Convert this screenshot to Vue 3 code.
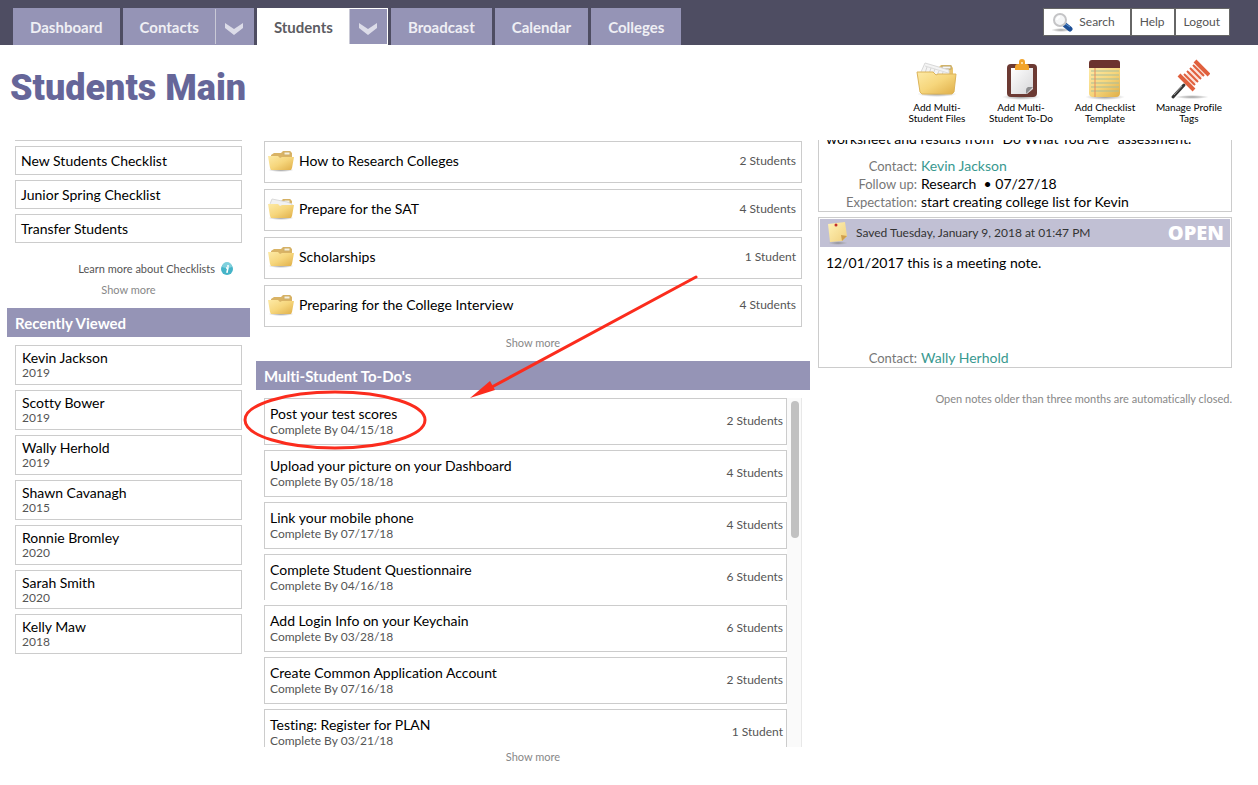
<script setup>
const checklists = ['New Students Checklist', 'Junior Spring Checklist', 'Transfer Students']

const recent = [
  { name: 'Kevin Jackson', year: '2019' },
  { name: 'Scotty Bower', year: '2019' },
  { name: 'Wally Herhold', year: '2019' },
  { name: 'Shawn Cavanagh', year: '2015' },
  { name: 'Ronnie Bromley', year: '2020' },
  { name: 'Sarah Smith', year: '2020' },
  { name: 'Kelly Maw', year: '2018' },
]

const files = [
  { title: 'How to Research Colleges', count: '2 Students', full: false },
  { title: 'Prepare for the SAT', count: '4 Students', full: true },
  { title: 'Scholarships', count: '1 Student', full: false },
  { title: 'Preparing for the College Interview', count: '4 Students', full: false },
]

const todos = [
  { title: 'Post your test scores', due: '04/15/18', count: '2 Students' },
  { title: 'Upload your picture on your Dashboard', due: '05/18/18', count: '4 Students' },
  { title: 'Link your mobile phone', due: '07/17/18', count: '4 Students' },
  { title: 'Complete Student Questionnaire', due: '04/16/18', count: '6 Students' },
  { title: 'Add Login Info on your Keychain', due: '03/28/18', count: '6 Students' },
  { title: 'Create Common Application Account', due: '07/16/18', count: '2 Students' },
  { title: 'Testing: Register for PLAN', due: '03/21/18', count: '1 Student' },
]
</script>

<template>
  <div class="page">
    <svg class="defs" width="0" height="0" aria-hidden="true">
      <defs>
        <linearGradient id="gold" x1="0" y1="0" x2="1" y2="1">
          <stop offset="0" stop-color="#fdeaa6" />
          <stop offset="0.5" stop-color="#f6d67c" />
          <stop offset="1" stop-color="#dfae48" />
        </linearGradient>
        <linearGradient id="note" x1="0" y1="0" x2="1" y2="1">
          <stop offset="0" stop-color="#fff3b8" />
          <stop offset="1" stop-color="#f0cf7c" />
        </linearGradient>
        <linearGradient id="paper" x1="0" y1="0" x2="1" y2="1">
          <stop offset="0" stop-color="#ffffff" />
          <stop offset="1" stop-color="#d6d6d8" />
        </linearGradient>
        <radialGradient id="shade">
          <stop offset="0" stop-color="#777" stop-opacity="0.75" />
          <stop offset="0.6" stop-color="#999" stop-opacity="0.4" />
          <stop offset="1" stop-color="#aaa" stop-opacity="0" />
        </radialGradient>
      </defs>
    </svg>

    <header class="topbar">
      <nav class="tabs">
        <a class="tab" href="#">Dashboard</a>
        <div class="split">
          <a class="tab" href="#">Contacts</a>
          <button class="drop" type="button" aria-label="Contacts menu">
            <svg width="18" height="12" viewBox="0 0 18 12"><path d="M0 0 9 6 18 0V5L9 12 0 5Z" fill="#dcdce8" /></svg>
          </button>
        </div>
        <div class="split active">
          <a class="tab" href="#">Students</a>
          <button class="drop" type="button" aria-label="Students menu">
            <svg width="18" height="12" viewBox="0 0 18 12"><path d="M0 0 9 6 18 0V5L9 12 0 5Z" fill="#dcdce8" /></svg>
          </button>
        </div>
        <a class="tab" href="#">Broadcast</a>
        <a class="tab" href="#">Calendar</a>
        <a class="tab" href="#">Colleges</a>
      </nav>
      <div class="tools">
        <button class="tool search" type="button">
          <svg width="22" height="20" viewBox="0 0 22 20">
            <ellipse cx="9" cy="18" rx="10" ry="2" fill="url(#shade)" />
            <path d="M13 13 18 17" stroke="#1d4f96" stroke-width="5" stroke-linecap="round" />
            <path d="M12 11 18 15" stroke="#5d95d2" stroke-width="1" />
            <circle cx="8" cy="8" r="6" fill="#f5f6f7" stroke="#c4c4c6" stroke-width="2" />
            <path d="M5 8a3 3 0 0 1 3-3" fill="none" stroke="#fff" stroke-width="2" />
          </svg>
          Search
        </button>
        <button class="tool" type="button">Help</button>
        <button class="tool" type="button">Logout</button>
      </div>
    </header>

    <div class="heading">
      <h1>Students Main</h1>
      <div class="actions">
        <a class="action" href="#">
          <svg width="42" height="42" viewBox="0 0 42 42">
            <ellipse cx="21" cy="35" rx="20" ry="3" fill="url(#shade)" />
            <path d="M23 8 25 6H35L37 9V18H22Z" fill="#e9c46d" />
            <rect x="26" y="7" width="9" height="3" fill="#f7f7f7" stroke="#b7a16a" stroke-width="1" />
            <path d="M5 13 9 4 33 11 33 17H5Z" fill="#f4f4f4" stroke="#d8d8d8" />
            <path d="M9 7 32 14" fill="none" stroke="#dcdcdc" stroke-width="1" />
            <path d="M11 8 9 14M15 9 13 15M19 10 17 15M23 12 21 16M27 13 26 16" stroke="#d4d4d4" />
            <path d="M1 13H17L20 16 22 15H40L38 33 36 35H6L4 33Z" fill="url(#gold)" stroke="#dcb45a" />
          </svg>
          <span>Add Multi-<br>Student Files</span>
        </a>
        <a class="action" href="#">
          <svg width="42" height="42" viewBox="0 0 42 42">
            <ellipse cx="21" cy="38" rx="19" ry="3" fill="url(#shade)" />
            <rect x="7" y="5" width="30" height="33" rx="4" fill="#6c3a33" />
            <path d="M11 9H33V30L27 35H11Z" fill="url(#paper)" />
            <path d="M33 28H28Q26 29 26 31V35Z" fill="#8d8d8f" />
            <path d="M15 11V8Q15 5 18 5H19V3Q19 0 22 0T25 3V5H26Q29 5 29 8V11Z" fill="#f2a42b" />
            <circle cx="22" cy="4" r="1" fill="#fff1c9" />
          </svg>
          <span>Add Multi-<br>Student To-Do</span>
        </a>
        <a class="action" href="#">
          <svg width="42" height="42" viewBox="0 0 42 42">
            <ellipse cx="21" cy="38" rx="20" ry="3" fill="url(#shade)" />
            <path d="M5 9H36V34Q36 38 32 38H9Q5 38 5 34Z" fill="url(#gold)" />
            <path d="M5 9V4Q5 1 8 1H33Q36 1 36 4V9Z" fill="#6c332e" />
            <path d="M7 12H35M7 16H35M7 20H35M7 24H35M7 28H35M7 32H35" stroke="#a9bd9a" stroke-width="1" />
            <path d="M11 9V38" stroke="#e58c5c" stroke-width="1" />
          </svg>
          <span>Add Checklist<br>Template</span>
        </a>
        <a class="action" href="#">
          <svg width="42" height="42" viewBox="0 0 42 42">
            <ellipse cx="24" cy="38" rx="17" ry="2" fill="url(#shade)" />
            <path d="M5 38 16 26" stroke="#333" stroke-width="3" stroke-linecap="round" />
            <path d="M6 36 14 27" stroke="#999" stroke-width="1" />
            <path d="M16 18 29 5 38 14 24 27Z" fill="#fbe3da" />
            <path d="M11 16 26 31M27 2 41 16" stroke="#e0603d" stroke-width="4" />
            <path d="M16 15 27 26M19 12 30 23M22 9 33 20M25 6 36 17" stroke="#e0603d" stroke-width="2" />
          </svg>
          <span>Manage Profile<br>Tags</span>
        </a>
      </div>
    </div>

    <main class="columns">
      <section class="left">
        <ul class="checklists">
          <li v-for="c in checklists" :key="c"><a href="#">{{ c }}</a></li>
        </ul>
        <a class="learn" href="#">
          Learn more about Checklists
          <svg width="14" height="14" viewBox="0 0 14 14">
            <circle cx="7" cy="7" r="6" fill="#45b4c8" />
            <path d="M2 5a5 5 0 0 1 10 0Q7 7 2 5" fill="#7fd0dd" />
            <circle cx="8" cy="4" r="1" fill="#fff" />
            <path d="M6 6H8L7 10H8" fill="none" stroke="#fff" stroke-width="1.5" />
          </svg>
        </a>
        <button class="more" type="button">Show more</button>
        <h2>Recently Viewed</h2>
        <ul class="recent">
          <li v-for="r in recent" :key="r.name">
            <a href="#">{{ r.name }}</a>
            <small>{{ r.year }}</small>
          </li>
        </ul>
      </section>

      <section class="middle">
        <ul class="files">
          <li v-for="f in files" :key="f.title">
            <svg width="28" height="22" viewBox="0 0 28 22">
              <ellipse cx="14" cy="20" rx="13" ry="2" fill="url(#shade)" />
              <path d="M4 5 7 3H14L16 1H23L25 3V9H4Z" fill="#d9b365" />
              <rect x="17" y="2" width="6" height="3" fill="#f6f1e0" stroke="#cfae66" />
              <path v-if="f.full" d="M3 6 5 1 20 4 25 6V9H3Z" fill="#f1f1f1" stroke="#dadada" />
              <path d="M1 6H11L13 8 15 7H27L25 18 24 20H4L3 18Z" fill="url(#gold)" />
            </svg>
            <a href="#">{{ f.title }}</a>
            <span class="count">{{ f.count }}</span>
          </li>
        </ul>
        <button class="more" type="button">Show more</button>
        <h2>Multi-Student To-Do's</h2>
        <div class="scroller">
          <ul class="todos">
            <li v-for="t in todos" :key="t.title">
              <div>
                <a href="#">{{ t.title }}</a>
                <small>Complete By {{ t.due }}</small>
              </div>
              <span class="count">{{ t.count }}</span>
            </li>
          </ul>
          <div class="track"><div class="thumb"></div></div>
        </div>
        <button class="more" type="button">Show more</button>
        <svg class="marks" width="460" height="330" viewBox="0 0 460 330" aria-hidden="true">
          <ellipse cx="95" cy="280" rx="90" ry="28" fill="none" stroke="#fb2c1d" stroke-width="3" />
          <path d="M456 137 250 248" stroke="#fb2c1d" stroke-width="3" stroke-linecap="round" />
          <path d="M230 258 250 241 255 250Z" fill="#fb2c1d" />
        </svg>
      </section>

      <section class="right">
        <article class="note cut">
          <p>worksheet and results from "Do What You Are" assessment.</p>
          <dl>
            <dt>Contact:</dt><dd><a href="#">Kevin Jackson</a></dd>
            <dt>Follow up:</dt><dd>Research &nbsp;• 07/27/18</dd>
            <dt>Expectation:</dt><dd>start creating college list for Kevin</dd>
          </dl>
        </article>
        <article class="note">
          <header>
            <svg width="22" height="24" viewBox="0 0 22 24">
              <ellipse cx="11" cy="22" rx="10" ry="2" fill="url(#shade)" />
              <path d="M1 3 18 1 20 15 15 20 3 21Z" fill="url(#note)" />
              <path d="M20 15 14 14 15 20Z" fill="#cf9f4d" />
              <circle cx="9" cy="4" r="1.5" fill="#c22f2b" />
            </svg>
            <span>Saved Tuesday, January 9, 2018 at 01:47 PM</span>
            <strong>OPEN</strong>
          </header>
          <p>12/01/2017 this is a meeting note.</p>
          <dl>
            <dt>Contact:</dt><dd><a href="#">Wally Herhold</a></dd>
          </dl>
        </article>
        <p class="hint">Open notes older than three months are automatically closed.</p>
      </section>
    </main>
  </div>
</template>

<style>
body {
  background: #fff;
}
</style>

<style scoped>
.page {
  font-family: Lato, "Liberation Sans", sans-serif;
  font-size: 14px;
  line-height: 18px;
  font-variant-ligatures: none;
  color: #000;
}
.page * {
  box-sizing: border-box;
}
.defs {
  position: absolute;
}
a {
  color: inherit;
  text-decoration: none;
}
button {
  font: inherit;
  border: 0;
  padding: 0;
  cursor: pointer;
}
ul,
dl,
p,
h1,
h2,
dd {
  margin: 0;
  padding: 0;
  list-style: none;
}
svg {
  flex: none;
}

.topbar {
  display: flex;
  justify-content: space-between;
  align-items: flex-start;
  height: 45px;
  padding: 8px 28px 0 13px;
  background: #4e4d62;
}
.tabs {
  display: flex;
  gap: 3px;
}
.tab {
  display: flex;
  align-items: center;
  height: 37px;
  padding: 0 17px;
  background: #9594b6;
  color: #efeff4;
  font-size: 15px;
  font-weight: 700;
}
.split {
  display: flex;
  background: #9594b6;
}
.split .tab {
  padding: 0 16px 0 17px;
}
.split.active {
  background: #fff;
}
.active .tab {
  background: #fff;
  color: #5c5c62;
}
.drop {
  display: flex;
  align-items: center;
  justify-content: center;
  width: 38px;
  height: 35px;
  margin: 1px 1px 1px 0;
  padding-top: 4px;
  background: #9594b6;
  border-left: 1px solid #c9c9d6;
}
.tools {
  display: flex;
  gap: 2px;
  padding: 1px;
  background: #666;
}
.tool {
  display: flex;
  align-items: center;
  gap: 5px;
  height: 26px;
  padding: 0 9px 0 8px;
  background: #fff;
  color: #555;
  font-size: 12px;
}
.tool.search {
  padding-right: 15px;
}

.heading {
  display: flex;
  justify-content: space-between;
  height: 95px;
  padding: 14px 27px 0 10px;
}
h1 {
  padding-top: 6px;
  font: 900 36px/46px Roboto, sans-serif;
  color: #666699;
}
.actions {
  display: flex;
}
.action {
  display: flex;
  flex-direction: column;
  align-items: center;
  gap: 1px;
  width: 84px;
  font-size: 10px;
  line-height: 11px;
  text-align: center;
}

.columns {
  display: grid;
  grid-template-columns: 243fr 554fr 416fr;
  column-gap: 6px;
  align-items: start;
  padding: 0 26px 20px 7px;
}
h2 {
  height: 29px;
  padding: 0 8px;
  background: #9594b6;
  color: #fff;
  font-size: 15px;
  line-height: 30px;
  font-weight: 700;
}
li {
  border: 1px solid #ccc;
}
small,
.count {
  font-size: 12px;
  color: #555;
}
.more {
  display: block;
  margin: 0 auto;
  background: none;
  color: #888;
  font-size: 11px;
  line-height: 16px;
}

.checklists {
  display: grid;
  gap: 5px;
  margin: 0 8px;
  padding-top: 5px;
  border-top: 1px solid #ccc;
}
.checklists li {
  height: 29px;
  padding: 0 5px;
  line-height: 28px;
}
.learn {
  display: flex;
  align-items: center;
  justify-content: flex-end;
  gap: 5px;
  margin: 17px 16px 4px 0;
  color: #555;
  font-size: 11px;
}
.left .more {
  margin-bottom: 10px;
}
.recent {
  display: grid;
  gap: 5px;
  margin: 8px 8px 0;
}
.recent li {
  height: 40px;
  padding: 3px 6px;
}
.recent li:nth-child(6) {
  height: 39px;
}
.recent a,
.todos a {
  display: block;
  line-height: 17px;
}
.recent small {
  display: block;
  line-height: 14px;
}
.todos small {
  display: block;
  line-height: 16px;
}

.middle {
  position: relative;
}
.files {
  display: grid;
  gap: 6px;
  margin: 1px 8px 8px;
}
.files li {
  display: flex;
  gap: 4px;
  height: 42px;
  padding: 8px 5px 0 2px;
}
.files a {
  padding-top: 2px;
}
.count {
  margin-left: auto;
}
.files .count {
  padding-top: 2px;
}
.middle h2 {
  margin-top: 10px;
}
.scroller {
  display: flex;
  height: 349px;
  margin: 8px 8px 2px;
  overflow: hidden;
}
.todos {
  display: flex;
  flex-direction: column;
  gap: 5px;
  flex: 1;
}
.todos li {
  flex: none;
  display: flex;
  height: 47px;
  padding: 6px 3px 0 5px;
}
.todos li:nth-child(4) {
  height: 46px;
  border-bottom: 0;
}
.todos .count {
  padding-top: 7px;
}
.track {
  width: 15px;
  padding: 3px 2px 0 4px;
  background: #fafafa;
  border-right: 1px solid #e8e8e8;
}
.thumb {
  width: 8px;
  height: 137px;
  border-radius: 4px;
  background: #c1c1c1;
}
.marks {
  position: absolute;
  top: 0;
  left: -16px;
  pointer-events: none;
}

.right {
  padding-left: 2px;
}
.note {
  border: 1px solid #ccc;
  padding: 1px 1px 0;
}
.note.cut {
  border-top: 0;
  padding-top: 0;
  margin-bottom: 5px;
  overflow: hidden;
}
.note p {
  padding: 7px 6px 8px;
}
.note.cut p {
  margin-top: -10px;
  padding: 0 6px 9px;
}
.note header {
  display: flex;
  align-items: center;
  height: 28px;
  padding: 0 6px 0 7px;
  gap: 7px;
  background: #c1c0d4;
  color: #333;
  font-size: 12px;
}
.note strong {
  margin-left: auto;
  color: #fff;
  font: 800 20px/28px "Open Sans", sans-serif;
}
.note dl {
  display: grid;
  grid-template-columns: 97px 1fr;
  column-gap: 4px;
}
.note:not(.cut) dl {
  margin-top: 69px;
}
dt {
  text-align: right;
  color: #777;
  font-size: 13px;
}
dd a {
  color: #399990;
}
.hint {
  margin-top: 22px;
  text-align: right;
  color: #888;
  font-size: 11px;
}
</style>
